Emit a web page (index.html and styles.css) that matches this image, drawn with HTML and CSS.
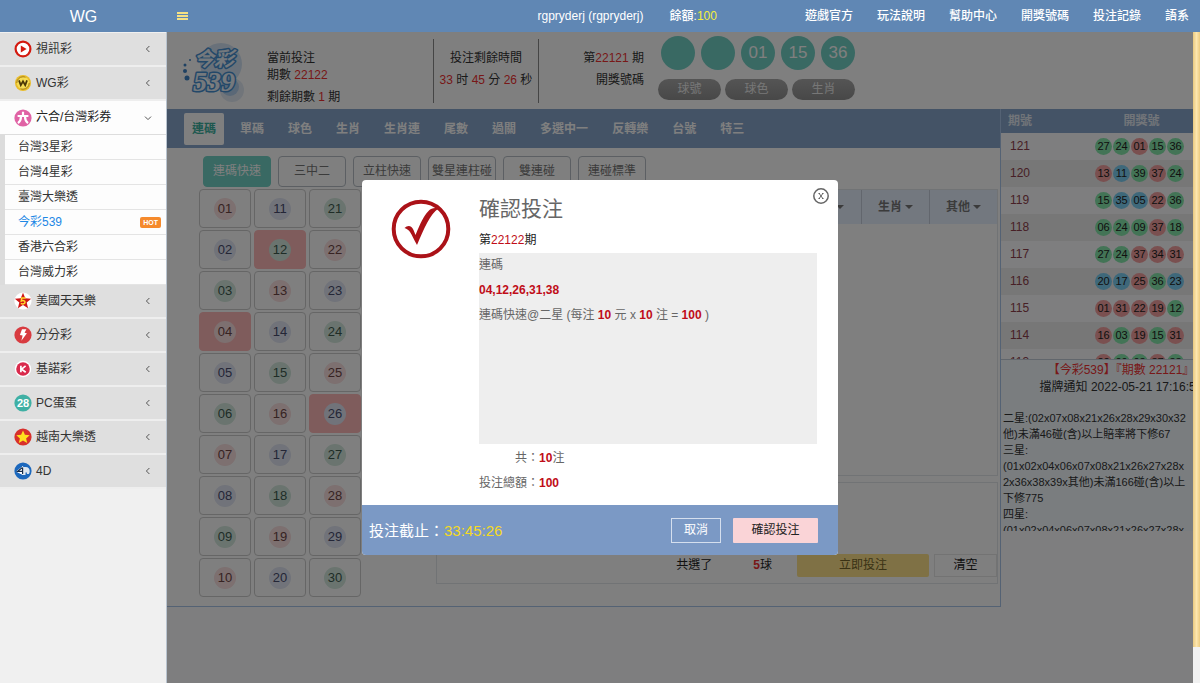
FILE: index.html
```html
<!DOCTYPE html>
<html lang="zh-Hant">
<head>
<meta charset="utf-8">
<meta name="viewport" content="width=device-width, initial-scale=1">
<title>WG</title>
<link rel="stylesheet" href="styles.css">
</head>
<body>
<header class="topbar">
  <a class="brand" href="#">WG</a>
  <button class="burger" type="button" aria-label="選單"><i></i><i></i><i></i></button>
  <span class="user">rgpryderj (rgpryderj)</span>
  <span class="balance">餘額:<b>100</b></span>
  <nav class="topnav">
    <a href="#">遊戲官方</a><a href="#">玩法說明</a><a href="#">幫助中心</a><a href="#">開獎號碼</a><a href="#">投注記錄</a><a href="#">語系</a>
  </nav>
</header>

<div class="shell">
  <nav class="sidebar">
    <a class="item" href="#">
      <svg class="icon" viewBox="0 0 18 18"><circle cx="9" cy="9" r="7.4" fill="#fff" stroke="#d3190f" stroke-width="2.2"/><path d="M6.8 5.6 12.6 9l-5.8 3.4z" fill="#d3190f"/></svg>
      <span>視訊彩</span><svg class="chev" viewBox="0 0 8 8"><path d="M5.4 1 2.4 4l3 3"/></svg>
    </a>
    <a class="item" href="#">
      <svg class="icon" viewBox="0 0 18 18"><circle cx="9" cy="9" r="8" fill="#e9bd2b"/><circle cx="9" cy="9" r="6.2" fill="#f6dc55" stroke="#9b7410" stroke-width=".9" stroke-dasharray="12 7"/><path d="M5 6.400 6.800 11.200 9 7.400l2.200 3.800L13 6.400" fill="none" stroke="#4c3707" stroke-width="1.800"/></svg>
      <span>WG彩</span><svg class="chev" viewBox="0 0 8 8"><path d="M5.4 1 2.4 4l3 3"/></svg>
    </a>
    <a class="item open" href="#">
      <svg class="icon" viewBox="0 0 18 18"><circle cx="9" cy="9" r="8.6" fill="#e063a5"/><path d="M9 2.8v3.4M3.6 7h10.800M7 7.6c0 3-.8 5-3 6.6M11 7.6c0 3 .8 5 3 6.6" fill="none" stroke="#fff" stroke-width="2.2"/></svg>
      <span>六合/台灣彩券</span><svg class="chev" viewBox="0 0 8 8"><path d="m1 2.6 3 3 3-3"/></svg>
    </a>
    <div class="submenu">
      <a href="#">台灣3星彩</a>
      <a href="#">台灣4星彩</a>
      <a href="#">臺灣大樂透</a>
      <a class="current" href="#">今彩539<span class="hot">HOT</span></a>
      <a href="#">香港六合彩</a>
      <a href="#">台灣威力彩</a>
    </div>
    <a class="item" href="#">
      <svg class="icon" viewBox="0 0 18 18"><circle cx="9" cy="9" r="8.6" fill="#fff"/><path d="m9 .8 2.3 5.4 5.9.5-4.5 3.8 1.4 5.7L9 13.1l-5.1 3.1 1.4-5.7L.8 6.700l5.900-.5z" fill="#d01818"/><path d="M11.700 6H7.800l-.5 3c1.600-.8 3.700-.5 3.700 1.300 0 1.700-2.400 2.100-4.100 1" fill="none" stroke="#ffd92c" stroke-width="1.500"/></svg>
      <span>美國天天樂</span><svg class="chev" viewBox="0 0 8 8"><path d="M5.4 1 2.4 4l3 3"/></svg>
    </a>
    <a class="item" href="#">
      <svg class="icon" viewBox="0 0 18 18"><circle cx="9" cy="9" r="8.600" fill="#d83b40"/><path d="M8 3.200h4.400l-1.800 3.500 2.300.6-5.500 7.500 1.200-5.200-2.700-.6z" fill="#fff"/></svg>
      <span>分分彩</span><svg class="chev" viewBox="0 0 8 8"><path d="M5.4 1 2.4 4l3 3"/></svg>
    </a>
    <a class="item" href="#">
      <svg class="icon" viewBox="0 0 18 18"><circle cx="9" cy="9" r="8.200" fill="#fff"/><circle cx="9" cy="9" r="6.800" fill="#d92a4c"/><path d="M6.900 5.800v6.400M11.600 5.800 7.600 9.200l4.100 3" fill="none" stroke="#fff" stroke-width="1.700"/></svg>
      <span>基諾彩</span><svg class="chev" viewBox="0 0 8 8"><path d="M5.4 1 2.4 4l3 3"/></svg>
    </a>
    <a class="item" href="#">
      <svg class="icon" viewBox="0 0 18 18"><circle cx="9" cy="9" r="8.600" fill="#3fb0a4"/><text class="icon-num" x="9" y="13" text-anchor="middle">28</text></svg>
      <span>PC蛋蛋</span><svg class="chev" viewBox="0 0 8 8"><path d="M5.4 1 2.4 4l3 3"/></svg>
    </a>
    <a class="item" href="#">
      <svg class="icon" viewBox="0 0 18 18"><circle cx="9" cy="9" r="8.600" fill="#d8302c"/><path d="m9 2.400 1.900 4.400 4.800.4-3.600 3.200 1.100 4.700L9 12.600l-4.200 2.500 1.100-4.700-3.600-3.200 4.800-.4z" fill="#ffe01e"/></svg>
      <span>越南大樂透</span><svg class="chev" viewBox="0 0 8 8"><path d="M5.4 1 2.4 4l3 3"/></svg>
    </a>
    <a class="item" href="#">
      <svg class="icon" viewBox="0 0 18 18"><circle cx="9" cy="9" r="8.600" fill="#1c68bd"/><path d="M9 5h2.500c3 0 4.200 1.800 4.200 4.200 0 1.200-.3 2-1 2.800h-1.800v-1.500h-1.400V13H9z" fill="#dce6ef"/><path d="M8.700 4.500 2.800 9.500 8.700 12.500z" fill="#fff" stroke="#fff"/><path d="M8.400 5.500 3.600 9.300h5.200M8.600 5.500v6.500" fill="none" stroke="#152b49" stroke-width="1.200"/></svg>
      <span>4D</span><svg class="chev" viewBox="0 0 8 8"><path d="M5.4 1 2.4 4l3 3"/></svg>
    </a>
  </nav>

  <main class="main">
    <section class="info">
      <svg class="logo" viewBox="0 0 66 66" role="img" aria-label="今彩539">
        <circle cx="41" cy="23" r="21" fill="#d3e3f4"/>
        <circle cx="52" cy="49" r="12" fill="#e2ebf5"/><circle cx="50" cy="46" r="9" fill="#b4d0ee"/>
        <circle cx="5" cy="24" r="1.500" fill="#3f82c4"/><circle cx="5" cy="30" r="2" fill="#3f82c4"/><circle cx="7" cy="37" r="2.500" fill="#3f82c4"/><circle cx="10" cy="19" r="1" fill="#3f82c4"/>
        <text class="logo-top" x="34" y="25" text-anchor="middle">今彩</text>
        <text class="logo-num" x="34" y="50" text-anchor="middle">539</text>
      </svg>
      <div class="current-issue">
        <div>當前投注</div><div>期數 <em>22122</em></div><div class="left-count">剩餘期數 <em>1</em> 期</div>
      </div>
      <div class="timer">
        <div>投注剩餘時間</div>
        <div><em>33</em> 时 <em>45</em> 分 <em>26</em> 秒</div>
      </div>
      <div class="last">
        <div>第<em>22121</em> 期</div><div>開獎號碼</div>
      </div>
      <div class="draw">
        <div class="draw-balls"><span></span><span></span><span>01</span><span>15</span><span>36</span></div>
        <div class="draw-modes"><button type="button">球號</button><button type="button">球色</button><button type="button">生肖</button></div>
      </div>
    </section>

    <div class="columns">
      <section class="play">
        <nav class="tabs">
          <a class="active" href="#">連碼</a><a href="#">單碼</a><a href="#">球色</a><a href="#">生肖</a><a href="#">生肖連</a><a href="#">尾數</a><a href="#">過關</a><a href="#">多選中一</a><a href="#">反轉樂</a><a href="#">台號</a><a href="#">特三</a>
        </nav>
        <div class="kinds">
          <button class="active" type="button">連碼快速</button><button type="button">三中二</button><button type="button">立柱快速</button><button type="button">雙星連柱碰</button><button type="button">雙連碰</button><button type="button">連碰標準</button>
        </div>
        <div class="board">
          <div class="numbers">
            <button type="button"><i>01</i></button><button type="button"><i>02</i></button><button type="button"><i>03</i></button><button class="picked" type="button"><i>04</i></button><button type="button"><i>05</i></button><button type="button"><i>06</i></button><button type="button"><i>07</i></button><button type="button"><i>08</i></button><button type="button"><i>09</i></button><button type="button"><i>10</i></button>
            <button type="button"><i>11</i></button><button class="picked" type="button"><i>12</i></button><button type="button"><i>13</i></button><button type="button"><i>14</i></button><button type="button"><i>15</i></button><button type="button"><i>16</i></button><button type="button"><i>17</i></button><button type="button"><i>18</i></button><button type="button"><i>19</i></button><button type="button"><i>20</i></button>
            <button type="button"><i>21</i></button><button type="button"><i>22</i></button><button type="button"><i>23</i></button><button type="button"><i>24</i></button><button type="button"><i>25</i></button><button class="picked" type="button"><i>26</i></button><button type="button"><i>27</i></button><button type="button"><i>28</i></button><button type="button"><i>29</i></button><button type="button"><i>30</i></button>
          </div>
          <div class="slips">
            <div class="slip-list">
              <div class="filters"><button type="button" aria-label="篩選"><i class="caret"></i></button><button type="button">生肖<i class="caret"></i></button><button type="button">其他<i class="caret"></i></button></div>
            </div>
            <div class="slip-form">
              <div class="slip-actions">
                <span>共選了</span><span class="count"><em>5</em>球</span>
                <button class="bet" type="button">立即投注</button><button class="clear" type="button">清空</button>
              </div>
            </div>
          </div>
        </div>
      </section>

      <aside class="results">
        <div class="history">
          <table>
            <thead><tr><th>期號</th><th>開獎號</th></tr></thead>
            <tbody>
              <tr><td>121</td><td><span class="balls"><i class="g">27</i><i class="g">24</i><i class="r">01</i><i class="g">15</i><i class="g">36</i></span></td></tr>
              <tr><td>120</td><td><span class="balls"><i class="r">13</i><i class="b">11</i><i class="g">39</i><i class="r">37</i><i class="g">24</i></span></td></tr>
              <tr><td>119</td><td><span class="balls"><i class="g">15</i><i class="b">35</i><i class="b">05</i><i class="r">22</i><i class="g">36</i></span></td></tr>
              <tr><td>118</td><td><span class="balls"><i class="g">06</i><i class="g">24</i><i class="g">09</i><i class="r">37</i><i class="g">18</i></span></td></tr>
              <tr><td>117</td><td><span class="balls"><i class="g">27</i><i class="g">24</i><i class="r">37</i><i class="r">34</i><i class="r">31</i></span></td></tr>
              <tr><td>116</td><td><span class="balls"><i class="b">20</i><i class="b">17</i><i class="r">25</i><i class="g">36</i><i class="b">23</i></span></td></tr>
              <tr><td>115</td><td><span class="balls"><i class="r">01</i><i class="r">31</i><i class="r">22</i><i class="r">19</i><i class="g">12</i></span></td></tr>
              <tr><td>114</td><td><span class="balls"><i class="r">16</i><i class="g">03</i><i class="r">19</i><i class="g">15</i><i class="r">31</i></span></td></tr>
              <tr><td>113</td><td><span class="balls"><i class="r">22</i><i class="g">09</i><i class="g">03</i><i class="r">37</i><i class="g">33</i></span></td></tr>
            </tbody>
          </table>
        </div>
        <div class="notice">
          <div class="notice-body">
            <p class="notice-title"><em>【今彩539】『期數 22121』</em><br>擋牌通知 2022-05-21 17:16:53</p>
            <p>二星:(02x07x08x21x26x28x29x30x32<br>他)未滿46碰(含)以上賠率將下修67<br>三星:<br>(01x02x04x06x07x08x21x26x27x28x<br>2x36x38x39x其他)未滿166碰(含)以上<br>下修775<br>四星:<br>(01x02x04x06x07x08x21x26x27x28x</p>
          </div>
        </div>
      </aside>
    </div>
  </main>
  <div class="scroll" aria-hidden="true"><div class="thumb"></div></div>
</div>

<div class="backdrop">
  <section class="modal" role="dialog" aria-modal="true" aria-labelledby="modal-title">
    <button class="close" type="button" aria-label="關閉">
      <svg viewBox="0 0 16 16"><circle cx="8" cy="8" r="7.200"/><path d="m6.200 5.500 3.600 5M9.800 5.500l-3.600 5M5.500 5.500H7M9 5.500h1.500M5.500 10.500H7M9 10.500h1.500"/></svg>
    </button>
    <div class="modal-body">
      <svg class="check" viewBox="0 0 60 60"><circle cx="30" cy="30" r="27.300" fill="none" stroke="#ab1218" stroke-width="4"/><path d="M13.500 29c3-3 7-3 9 2l2 5c5-12 8-19 13-24 3-3 6-3.500 10-2.500C39 15 33 30 26 46c-3-5-5-10-7-13-1-2-3-3-5.500-4z" fill="#ab1218"/></svg>
      <div class="confirm">
        <h2 id="modal-title">確認投注</h2>
        <p class="issue">第<em>22122</em>期</p>
        <div class="detail">
          <p>連碼</p>
          <p><b>04,12,26,31,38</b></p>
          <p>連碼快速@二星 (每注 <b>10</b> 元 x <b>10</b> 注 = <b>100</b> )</p>
        </div>
        <dl class="totals">
          <dt>共：</dt><dd><b>10</b>注</dd>
          <dt>投注總額：</dt><dd><b>100</b></dd>
        </dl>
      </div>
    </div>
    <footer class="modal-foot">
      <span class="deadline">投注截止：<em>33:45:26</em></span>
      <button class="cancel" type="button">取消</button>
      <button class="ok" type="button">確認投注</button>
    </footer>
  </section>
</div>
</body>
</html>
```
FILE: styles.css
```css
* { box-sizing: border-box; }
body {
  margin: 0;
  height: 100vh;
  display: flex;
  flex-direction: column;
  overflow: hidden;
  background: #fff;
  color: #333;
  font: 12px/17px "Liberation Sans", "Noto Sans CJK TC", sans-serif;
}
a { color: inherit; text-decoration: none; }
button { font: inherit; color: inherit; padding: 0; border: 0; background: none; }
em, i { font-style: normal; }
p, h2, dl, dd { margin: 0; }

/* top bar */
.topbar {
  position: relative;
  z-index: 3;
  flex: none;
  height: 32px;
  display: flex;
  align-items: center;
  background: #6087b4;
  color: #fff;
}
.brand { width: 167px; text-align: center; font-size: 16px; }
.burger { width: 30px; padding-left: 10px; display: grid; gap: 1px; }
.burger i { width: 11px; height: 2px; background: #f5e184; }
.user { margin-left: auto; margin-right: 26px; }
.user, .balance, .topnav { font-weight: 500; }
.balance { margin-right: 88px; }
.balance b { color: #f3ee3c; font-weight: 400; }
.topnav { display: flex; gap: 24px; padding-right: 11px; }

.shell { flex: 1; min-height: 0; display: flex; }

/* side menu */
.sidebar {
  position: relative;
  z-index: 3;
  flex: none;
  width: 167px;
  padding-top: 1px;
  background: #f0f0f0;
  border-right: 1px solid #b9c4d0;
}
.item {
  height: 34px;
  display: flex;
  align-items: center;
  gap: 4px;
  padding: 0 14px;
  background: #dfdfdf;
  border-bottom: 2px solid #eee;
}
.item.open { background: #fdfdfd; border-bottom: 1px solid #ddd; color: #222; }
.icon { width: 18px; height: 18px; }
.icon-num { font: bold 11px "Liberation Sans", sans-serif; fill: #fff; }
.chev { width: 8px; height: 8px; margin-left: auto; fill: none; stroke: #555; stroke-width: 1; }
.submenu { border-left: 5px solid #dcdcdc; background: #fdfdfd; }
.submenu a {
  height: 25px;
  display: flex;
  align-items: center;
  padding: 0 5px 0 13px;
  border-bottom: 1px solid #e4e4e4;
}
.submenu .current { color: #1e88e5; }
.hot {
  margin-left: auto;
  padding: 0 3px;
  border-radius: 2px;
  background: #f58a2c;
  color: #fff;
  font-size: 7px;
  line-height: 11px;
  font-weight: bold;
}

/* draw information */
.main { flex: 1; min-width: 0; overflow: hidden; background: #fcfdff; display: flex; flex-direction: column; }
.info em, .slip-actions em { color: #f03030; }
.info { flex: none; height: 77px; display: flex; padding-top: 4px; background: #fff; }
.logo { flex: none; width: 66px; height: 66px; margin: 5px 21px 0 13px; }
.logo-top, .logo-num { fill: #eaf2fa; stroke: #4690d2; stroke-width: 3px; stroke-linejoin: round; paint-order: stroke; font-style: italic; }
.logo-top { font-size: 20px; font-weight: 700; font-family: "Noto Sans CJK TC", sans-serif; }
.logo-num { font-size: 28px; font-weight: 700; font-family: "Liberation Serif", serif; }
.current-issue { width: 166px; padding-top: 14px; }
.left-count { margin-top: 5px; }
.timer, .last { height: 64px; margin-top: 3px; padding-top: 8px; line-height: 22px; }
.timer { width: 106px; text-align: center; border: solid #8a8a8a; border-width: 0 1px; }
.last { width: 105px; text-align: right; }
.draw { margin-left: 14px; }
.draw-balls { display: flex; gap: 6px; padding-left: 3px; padding-bottom: 9px; }
.draw-balls span {
  width: 34px;
  height: 34px;
  border-radius: 50%;
  background: #73d2c6;
  color: #fff;
  font-size: 17px;
  line-height: 34px;
  text-align: center;
}
.draw-modes { display: flex; gap: 4px; }
.draw-modes button { width: 63px; height: 21px; border-radius: 11px; background: linear-gradient(#aaa, #909090); color: #eee; }

.columns { flex: 1; min-height: 0; display: flex; align-items: flex-start; }

/* play area */
.play { flex: 1; min-width: 0; border-right: 1px solid #a9c4e8; border-bottom: 1px solid #a9c4e8; background: #fff; padding-bottom: 9px; }
.tabs { height: 39px; display: flex; align-items: center; gap: 8px; padding-left: 17px; background: #88a6cc; color: #fff; font-weight: bold; }
.tabs a { padding: 0 8px; line-height: 32px; border-radius: 2px; }
.tabs .active { background: #fff; color: #3cb09e; }
.kinds { display: flex; gap: 7px; padding: 8px 0 2px 36px; }
.kinds button { width: 68px; height: 31px; border: 1px solid #b8bfc6; border-radius: 4px; color: #777; }
.kinds .active { background: #73d2c6; border-color: #73d2c6; color: #fff; }
.board { display: flex; justify-content: space-between; padding: 0 2px 0 32px; }
.numbers { display: grid; grid-auto-flow: column; grid-template-rows: repeat(10, 39px); gap: 2px 3px; align-content: start; }
.numbers button { width: 52px; border: 1px solid #ccc; border-radius: 4px; }
.numbers i { display: block; width: 22px; height: 22px; margin: auto; border-radius: 50%; font-size: 13px; line-height: 22px; }
.numbers button:nth-child(3n+1) i { background: #fae0e0; color: #6e4646; }
.numbers button:nth-child(3n+2) i { background: #e2e6f4; color: #484c6e; }
.numbers button:nth-child(3n) i { background: #d4e9de; color: #3e5a4e; }
.numbers .picked { background: #ffb8b8; border-color: #ffb8b8; }
.slips { width: 562px; }
.slip-list { height: 287px; border: 1px solid #e3e6ea; }
.filters { display: flex; justify-content: flex-end; background: #e6f0ff; }
.filters button { width: 68px; height: 34px; border-left: 1px solid #c5cddb; color: #777; font-weight: bold; }
.filters button:first-child { padding-left: 22px; }
.caret { display: inline-block; margin-left: 3px; vertical-align: 2px; border: 4px solid transparent; border-top-color: #777; border-bottom: 0; }
.slip-form { height: 102px; margin-top: 6px; border: 1px solid #e3e6ea; display: flex; align-items: flex-end; padding-bottom: 6px; }
.slip-actions { flex: 1; display: flex; align-items: center; justify-content: flex-end; color: #222; }
.slip-actions .count { margin: 0 25px 0 41px; }
.slip-actions em { font-weight: bold; }
.bet { width: 132px; height: 23px; border-radius: 2px; background: #ffe38a; color: #75652a; }
.clear { width: 63px; height: 23px; margin-left: 5px; border: 1px solid #e6e6e6; }

/* results */
.results { flex: none; width: 192px; }
.history { height: 250px; overflow: hidden; }
.history table { width: 100%; border-collapse: collapse; }
.history th { height: 24px; padding: 0; background: #88a6cc; color: #e4eaf2; text-align: left; padding-left: 7px; }
.history th + th { text-align: center; padding: 0 0 0 43px; }
.history td { height: 27px; padding: 0 0 0 9px; color: #8f3f4c; }
.history tr:nth-child(even) td { background: #eee; }
.history td + td { padding: 0 9px 0 0; }
.balls { display: flex; justify-content: flex-end; gap: 1px; }
.balls i { width: 17px; height: 17px; border-radius: 50%; color: #222; font-size: 11px; line-height: 17px; text-align: center; }
.balls .g { background: #86e8ac; }
.balls .r { background: #f5a0a0; }
.balls .b { background: #7cd0f5; }
.notice { height: 172px; overflow: hidden; background: #f4faff; border-top: 1px solid #c3cdd8; }
.notice-body { min-width: 238px; padding: 2px 0 0 2px; white-space: nowrap; font-size: 11px; line-height: 16px; }
.notice-title { text-align: center; font-size: 12px; line-height: 17px; margin-bottom: 14px; }
.notice-title em { color: #f03030; }

/* page scroll strip */
.scroll { position: relative; z-index: 3; flex: none; width: 7px; padding-bottom: 36px; background: #f1f1f1; }
.thumb { height: 100%; background: linear-gradient(90deg, #e9c980, #fde6ae, #eccb80); }

/* bet confirmation */
.backdrop {
  position: fixed;
  inset: 0;
  z-index: 2;
  display: flex;
  align-items: flex-start;
  justify-content: center;
  padding-top: 180px;
  background: rgba(0, 0, 0, .5);
}
.modal { position: relative; width: 476px; border-radius: 4px; background: #fff; overflow: hidden; }
.close { position: absolute; top: 8px; right: 9px; width: 16px; height: 16px; }
.close svg { display: block; fill: none; stroke: #666; stroke-width: 1; }
.close circle { stroke-width: 1.500; }
.modal-body { display: flex; gap: 28px; padding: 16px 21px 9px 29px; color: #666; }
.check { flex: none; width: 60px; height: 60px; margin-top: 3px; }
.confirm { flex: 1; }
.confirm h2 { font-size: 21px; line-height: 26px; font-weight: 400; }
.confirm b, .issue em { color: #c00d18; }
.issue { padding: 10px 0 4px; color: #222; }
.detail { height: 191px; background: #eee; }
.detail p, .totals { line-height: 25px; }
.totals { display: grid; grid-template-columns: max-content 1fr; padding-top: 2px; }
.totals dt { text-align: right; }
.modal-foot { height: 50px; display: flex; align-items: center; gap: 12px; padding: 0 20px 0 7px; background: #7b99c5; }
.deadline { margin-right: auto; color: #fff; font-size: 15px; }
.deadline em { color: #f5d922; }
.modal-foot button { height: 25px; }
.cancel { width: 50px; border: 1px solid #d5dfee; color: #fff; }
.ok { width: 85px; background: #fad4d7; border-radius: 1px; color: #222; }
```
